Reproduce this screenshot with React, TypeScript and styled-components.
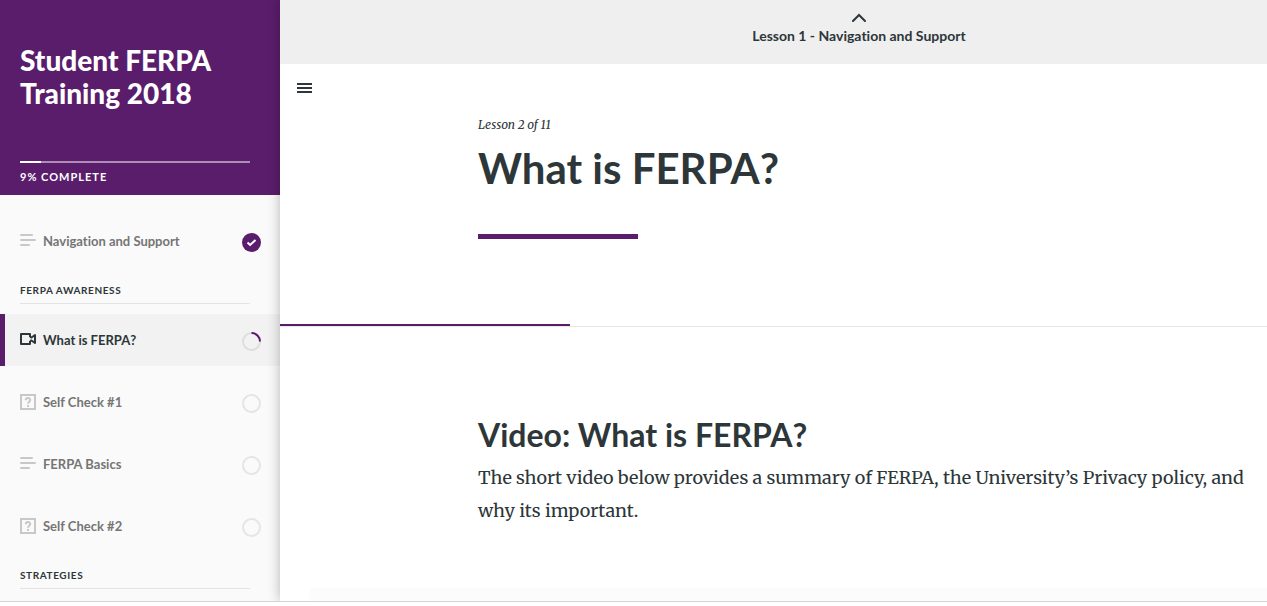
import React from "react";
import styled, { createGlobalStyle } from "styled-components";

const purple = "#5a1d6b";
const ink = "#2d3639";
const serif = `"Merriweather", "DejaVu Serif Condensed", "DejaVu Serif", serif`;

const GlobalStyle = createGlobalStyle`
  * { box-sizing: border-box; }
  body {
    margin: 0;
    background: #fff;
    color: ${ink};
    font-family: "Lato", "Liberation Sans", sans-serif;
    font-variant-ligatures: none;
  }
  h1, h2, h3, p, ul { margin: 0; padding: 0; }
`;

const Page = styled.div`
  display: flex;
  min-height: 100vh;
  flex-direction: column;
  padding-bottom: 4px;
`;

const Frame = styled.div`
  display: flex;
  flex: 1;
  overflow: hidden;
  border-bottom: 1px solid #d3d4d5;
`;

const Sidebar = styled.aside`
  flex: 0 0 280px;
  background: #fafafa;
`;

const CourseHeader = styled.header`
  padding: 44px 30px 9px 20px;
  margin-bottom: 20px;
  background: ${purple};
  color: #fff;
`;

const CourseTitle = styled.h2`
  margin-bottom: 51px;
  font-size: 28px;
  font-weight: 900;
  line-height: 33px;
`;

const CourseTrack = styled.div`
  height: 2px;
  margin-bottom: 5px;
  background: #ae8eb5;
`;

const CourseFill = styled.div`
  height: 2px;
  background: #fff;
`;

const CourseProgress = styled.p`
  font-size: 11px;
  font-weight: 700;
  line-height: 18px;
  letter-spacing: 1px;
  text-transform: uppercase;
`;

const SectionTitle = styled.h3`
  height: 37px;
  margin: 0 30px 10px 20px;
  padding-top: 15px;
  border-bottom: 1px solid #e4e4e4;
  font-size: 10px;
  font-weight: 700;
  line-height: 16px;
  letter-spacing: 0.06em;
  text-transform: uppercase;
`;

const LessonList = styled.ul`
  display: grid;
  gap: 10px;
  list-style: none;
`;

const LessonLink = styled.a<{ $active?: boolean }>`
  display: grid;
  grid-template-columns: 16px 1fr 19px;
  align-items: center;
  gap: 7px;
  height: 52px;
  padding: 0 19px 0 15px;
  border-left: 5px solid ${(p) => (p.$active ? purple : "transparent")};
  background: ${(p) => (p.$active ? "#f2f2f2" : "transparent")};
  color: ${(p) => (p.$active ? ink : "#757575")};
  font-size: 13px;
  font-weight: 700;
  line-height: 20px;
  text-decoration: none;

  > svg:first-child {
    display: block;
    color: ${(p) => (p.$active ? ink : "#c8c8c8")};
  }
  > svg:last-child {
    display: block;
    margin-top: 3px;
  }
`;

const Main = styled.main`
  position: relative;
  flex: 1;
  min-width: 0;
  background: #fff;
  box-shadow: 0 0 12px rgba(0, 0, 0, 0.28);
`;

const PreviousBar = styled.nav`
  height: 64px;
  padding-left: 198px;
  background: #efefef;
`;

const PreviousLink = styled.a`
  display: flex;
  max-width: 762px;
  flex-direction: column;
  align-items: center;
  gap: 3px;
  padding-top: 13px;
  color: ${ink};
  font-size: 14px;
  font-weight: 700;
  line-height: 20px;
  text-decoration: none;
`;

const MenuButton = styled.button`
  display: block;
  margin: 16px 0 0 14px;
  padding: 3px;
  border: 0;
  background: none;
  color: ${ink};

  svg { display: block; }
`;

const LessonHeader = styled.header`
  padding: 19px 0 85px 198px;
`;

const LessonCount = styled.p`
  margin-bottom: 3px;
  font-family: ${serif};
  font-size: 12px;
  font-style: italic;
  line-height: 20px;
`;

const LessonTitle = styled.h1`
  margin-bottom: 36px;
  font-size: 42px;
  font-weight: 700;
  line-height: 60px;
`;

const Accent = styled.div`
  width: 160px;
  height: 5px;
  background: ${purple};
`;

const LessonTrack = styled.div`
  height: 3px;
  border-bottom: 1px solid #e8e8e8;
`;

const LessonFill = styled.div`
  width: 290px;
  height: 2px;
  background: ${purple};
`;

const Article = styled.article`
  max-width: 970px;
  padding: 88px 0 61px 198px;
`;

const ArticleTitle = styled.h2`
  margin-bottom: 6px;
  font-size: 32px;
  font-weight: 700;
  line-height: 40px;
`;

const ArticleText = styled.p`
  font-family: ${serif};
  font-size: 18px;
  line-height: 33px;
`;

const NextBlock = styled.div`
  height: 13px;
  margin-left: 30px;
  background: #fcfcfc;
`;

type Kind = "text" | "video" | "quiz";
type Status = "done" | "started" | "open";

function KindIcon({ kind }: { kind: Kind }) {
  if (kind === "text") {
    return (
      <svg width="16" height="16" viewBox="0 0 16 16" stroke="currentColor" strokeWidth="2" strokeLinecap="round" aria-hidden="true">
        <path d="M1 2h11M1 7h14M1 12h8" />
      </svg>
    );
  }
  if (kind === "video") {
    return (
      <svg width="16" height="16" viewBox="0 0 16 16" fill="none" stroke="currentColor" strokeWidth="2" strokeLinejoin="round" aria-hidden="true">
        <path d="M10 5V2H1v10h9V9" />
        <path d="M10 5l1.500 .5L15 3v8l-3.500-2.500L10 9" />
      </svg>
    );
  }
  return (
    <svg width="16" height="16" viewBox="0 0 16 16" fill="none" stroke="currentColor" strokeWidth="2" aria-hidden="true">
      <path d="M1 1h14v14H1z" />
      <path d="M5.800 6.200C5.800 3.400 10.200 3.400 10.200 6.100C10.200 7.700 8 7.700 8 9.800M8 11v2" />
    </svg>
  );
}

function StatusIcon({ status }: { status: Status }) {
  if (status === "done") {
    return (
      <svg width="19" height="19" viewBox="0 0 19 19" fill="none" role="img" aria-label="Completed">
        <circle cx="9.500" cy="9.500" r="9.500" fill={purple} />
        <path d="M5.500 9.500l2.600 2.500 5.400-5" stroke="#fff" strokeWidth="2" />
      </svg>
    );
  }
  return (
    <svg width="19" height="19" viewBox="0 0 19 19" fill="none" strokeWidth="2" role="img" aria-label={status === "started" ? "In progress" : "Not started"}>
      <circle cx="9.500" cy="9.500" r="8.500" stroke={status === "started" ? "#dedede" : "#e5e5e5"} />
      {status === "started" && <path d="M9.500 1A8.500 8.500 0 0 1 18 9.500" stroke={purple} />}
    </svg>
  );
}

function Lesson({ title, kind, status, active }: { title: string; kind: Kind; status: Status; active?: boolean }) {
  return (
    <li>
      <LessonLink href="#" $active={active} aria-current={active ? "page" : undefined}>
        <KindIcon kind={kind} />
        <span>{title}</span>
        <StatusIcon status={status} />
      </LessonLink>
    </li>
  );
}

export default function App() {
  const complete = 9;
  return (
    <Page>
      <GlobalStyle />
      <Frame>
        <Sidebar>
          <CourseHeader>
            <CourseTitle>Student FERPA Training 2018</CourseTitle>
            <CourseTrack>
              <CourseFill style={{ width: `${complete}%` }} />
            </CourseTrack>
            <CourseProgress>{complete}% complete</CourseProgress>
          </CourseHeader>
          <LessonList>
            <Lesson title="Navigation and Support" kind="text" status="done" />
          </LessonList>
          <SectionTitle>FERPA Awareness</SectionTitle>
          <LessonList>
            <Lesson title="What is FERPA?" kind="video" status="started" active />
            <Lesson title="Self Check #1" kind="quiz" status="open" />
            <Lesson title="FERPA Basics" kind="text" status="open" />
            <Lesson title="Self Check #2" kind="quiz" status="open" />
          </LessonList>
          <SectionTitle>Strategies</SectionTitle>
        </Sidebar>
        <Main>
          <PreviousBar>
            <PreviousLink href="#">
              <svg width="14" height="10" viewBox="0 0 14 10" fill="none" stroke="currentColor" strokeWidth="2" strokeLinecap="round" aria-hidden="true">
                <path d="M1 8l6-6 6 6" />
              </svg>
              Lesson 1 - Navigation and Support
            </PreviousLink>
          </PreviousBar>
          <MenuButton aria-label="Toggle menu">
            <svg width="15" height="10" viewBox="0 0 15 10" fill="currentColor" aria-hidden="true">
              <path d="M0 0h15v2H0zM0 4h15v2H0zM0 8h15v2H0z" />
            </svg>
          </MenuButton>
          <LessonHeader>
            <LessonCount>Lesson 2 of 11</LessonCount>
            <LessonTitle>What is FERPA?</LessonTitle>
            <Accent />
          </LessonHeader>
          <LessonTrack>
            <LessonFill />
          </LessonTrack>
          <Article>
            <ArticleTitle>Video: What is FERPA?</ArticleTitle>
            <ArticleText>
              The short video below provides a summary of FERPA, the University’s Privacy policy, and why its important.
            </ArticleText>
          </Article>
          <NextBlock />
        </Main>
      </Frame>
    </Page>
  );
}
